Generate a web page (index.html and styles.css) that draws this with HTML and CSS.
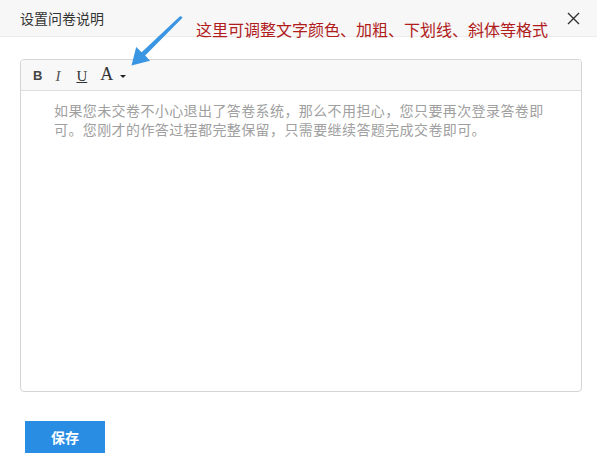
FILE: index.html
```html
<!DOCTYPE html>
<html lang="zh">
<head>
<meta charset="utf-8">
<title>设置问卷说明</title>
<link rel="stylesheet" href="styles.css">
</head>
<body>
<div class="dialog">
  <div class="header">
    <span class="title">设置问卷说明</span>
    <span class="close">
      <svg width="13" height="13" viewBox="0 0 13 13"><path d="M1 1 L12 12 M12 1 L1 12" stroke="#333" stroke-width="1.4" fill="none"/></svg>
    </span>
  </div>
  <div class="content">
    <div class="editor">
      <div class="toolbar">
        <span class="tb tb-b">B</span>
        <span class="tb tb-i">I</span>
        <span class="tb tb-u">U</span>
        <span class="tb tb-a">A</span>
        <span class="caret"></span>
      </div>
      <div class="body">如果您未交卷不小心退出了答卷系统，那么不用担心，您只要再次登录答卷即可。您刚才的作答过程都完整保留，只需要继续答题完成交卷即可。</div>
    </div>
    <div class="actions">
      <button class="save">保存</button>
    </div>
  </div>
  <div class="note">这里可调整文字颜色、加粗、下划线、斜体等格式</div>
  <svg class="arrow" width="200" height="80" viewBox="0 0 200 80">
    <polygon points="181.5,16.5 182.5,17.8 145.2,55.6 150,60.8 131.5,65.5 136.2,47 141.6,52.2 180,16.2" fill="#3a95e2"/>
  </svg>
</div>
</body>
</html>
```

FILE: styles.css
```css
html, body {
  margin: 0;
  padding: 0;
  background: #fff;
}
body {
  font-family: "Noto Sans CJK SC", "Noto Sans", sans-serif;
  width: 600px;
  height: 462px;
  overflow: hidden;
}
.dialog {
  position: relative;
  width: 600px;
  height: 462px;
}
.header {
  width: 597px;
  height: 37px;
  box-sizing: border-box;
  background: #f7f7f7;
  border-bottom: 1px solid #ececec;
  display: flex;
  align-items: center;
  justify-content: space-between;
  padding: 0 17px 0 20px;
}
.title {
  font-size: 14px;
  color: #333;
  line-height: 20px;
}
.close {
  display: flex;
  width: 13px;
  height: 13px;
}
.content {
  padding: 22px 18px 0 20px;
}
.editor {
  width: 562px;
  height: 333px;
  box-sizing: border-box;
  border: 1px solid #d4d4d4;
  border-radius: 4px;
  overflow: hidden;
}
.toolbar {
  height: 30px;
  background: #f8f8f8;
  border-bottom: 1px solid #dedede;
  display: flex;
  align-items: center;
  padding-left: 12px;
  color: #444;
}
.tb {
  display: inline-block;
  line-height: 20px;
}
.tb-b {
  font-family: "Liberation Sans", sans-serif;
  font-weight: bold;
  font-size: 13px;
  color: #444;
  margin-top: 1px;
}
.tb-i {
  font-family: "Liberation Serif", serif;
  font-style: italic;
  font-size: 15px;
  color: #555;
  margin-left: 13px;
  margin-top: 1px;
}
.tb-u {
  font-family: "Liberation Serif", serif;
  font-size: 15px;
  text-decoration: underline;
  color: #333;
  margin-left: 16px;
  margin-top: 1px;
}
.tb-a {
  font-family: "Liberation Serif", serif;
  font-size: 18px;
  color: #333;
  margin-left: 13px;
  margin-top: -2px;
}
.caret {
  width: 0;
  height: 0;
  border-left: 3px solid transparent;
  border-right: 3px solid transparent;
  border-top: 3px solid #222;
  margin-left: 7px;
  margin-top: 2px;
}
.body {
  padding: 10px 33px 0 33px;
  font-size: 14px;
  letter-spacing: 0.4px;
  line-height: 19px;
  color: #a0a0a0;
}
.actions {
  padding: 29px 0 0 5px;
}
.save {
  width: 80px;
  height: 32px;
  border: none;
  background: #2a8de4;
  color: #fff;
  font-family: "Noto Sans CJK SC", sans-serif;
  font-weight: bold;
  font-size: 14px;
  padding: 0;
}
.note {
  position: absolute;
  left: 196px;
  top: 19px;
  font-size: 16px;
  line-height: 20px;
  color: #b01c1c;
  white-space: nowrap;
}
.arrow {
  position: absolute;
  left: 0;
  top: 0;
}
```
